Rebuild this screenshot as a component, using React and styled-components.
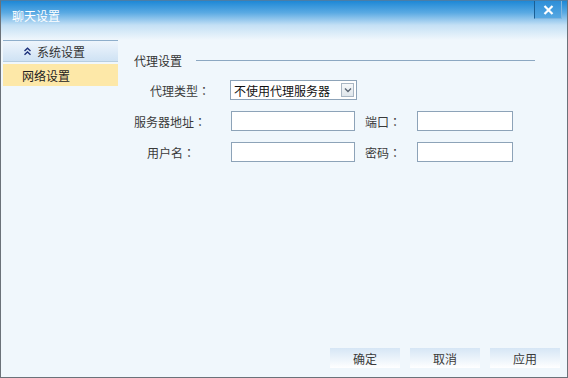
import styled, { createGlobalStyle } from "styled-components";

const GlobalStyle = createGlobalStyle`
  html, body {
    margin: 0;
    padding: 0;
    background: #f0f7fc;
  }
  body {
    font-family: "Noto Sans CJK SC", "DejaVu Sans", sans-serif;
    font-size: 12px;
    color: #333;
  }
`;

const Window = styled.div`
  width: 568px;
  height: 378px;
  box-sizing: border-box;
  display: flex;
  flex-direction: column;
  background: #f0f7fc;
  border: 1px solid #6b7279;
  border-top-color: #4a7ea8;
`;

const TitleBar = styled.div`
  height: 39px;
  flex-shrink: 0;
  display: flex;
  align-items: flex-start;
  justify-content: space-between;
  background: linear-gradient(180deg, #1e88d6 0%, #5aaae3 30%, #c4e0f5 62%, #f0f7fc 100%);
`;

const Title = styled.div`
  color: #fff;
  font-size: 12px;
  line-height: 14px;
  padding: 8px 0 0 11px;
`;

const CloseButton = styled.div`
  width: 26px;
  height: 17px;
  margin-right: 5px;
  display: flex;
  align-items: center;
  justify-content: center;
  border-left: 1px solid #1a5f94;
  border-right: 1px solid #7fb6e0;
  border-bottom: 1px solid #7fb6e0;
  background: linear-gradient(180deg, #2d8ed8, #56a8e2);
`;

const Body = styled.div`
  flex: 1;
  display: flex;
  min-height: 0;
`;

const Sidebar = styled.div`
  width: 115px;
  margin-left: 2px;
  flex-shrink: 0;
  display: flex;
  flex-direction: column;
  gap: 2px;
`;

const NavHeader = styled.div`
  height: 20px;
  display: flex;
  align-items: center;
  padding-left: 20px;
  gap: 5px;
  color: #333;
  border-top: 1px solid #8eaecb;
  border-bottom: 1px solid #b8cee0;
  background: linear-gradient(180deg, #eef5fc 0%, #cfe2f4 100%);
`;

const NavItem = styled.div`
  height: 22px;
  display: flex;
  align-items: center;
  padding-left: 19px;
  color: #222;
  background: ${(p) => (p.$active ? "#fde8a8" : "transparent")};
`;

const Content = styled.div`
  flex: 1;
  display: flex;
  flex-direction: column;
  padding: 12px 32px 0 16px;
`;

const SectionHead = styled.div`
  display: flex;
  align-items: center;
  gap: 14px;
  color: #333;
  height: 16px;
`;

const Rule = styled.div`
  flex: 1;
  height: 1px;
  background: #8ca8c2;
`;

const Form = styled.div`
  display: grid;
  grid-template-columns: 97px 124px 62px 96px;
  row-gap: 11px;
  margin-top: 12px;
  align-items: center;
`;

const Label = styled.div`
  padding-left: ${(p) => p.$indent || 0}px;
  color: #3a3a3a;
  white-space: nowrap;
`;

const Colon = styled.span`
  font-family: "Noto Sans CJK TC", "DejaVu Sans", sans-serif;
`;

const Input = styled.div`
  height: 20px;
  box-sizing: border-box;
  border: 1px solid #8da3b8;
  background: #fff;
`;

const Select = styled.div`
  width: 127px;
  height: 20px;
  box-sizing: border-box;
  margin-left: -1px;
  border: 1px solid #8da3b8;
  background: #fff;
  display: flex;
  align-items: center;
  justify-content: space-between;
  padding: 0 2px 0 3px;
  color: #111;
  font-size: 12px;
`;

const SelectArrow = styled.div`
  width: 13px;
  height: 14px;
  box-sizing: border-box;
  border: 1px solid #a9b6c3;
  background: linear-gradient(180deg, #f6f8fa, #dfe6ec);
  display: flex;
  align-items: center;
  justify-content: center;
`;

const Footer = styled.div`
  height: 36px;
  flex-shrink: 0;
  display: flex;
  justify-content: flex-end;
  align-items: flex-start;
  gap: 10px;
  padding: 7px 7px 0 0;
  box-sizing: border-box;
`;

const Button = styled.div`
  width: 70px;
  height: 20px;
  display: flex;
  align-items: center;
  justify-content: center;
  color: #3a3a3a;
  background: linear-gradient(180deg, #d6e6f5 0%, #eef5fb 60%, #ffffff 100%);
`;

function FieldLabel({ text, indent }) {
  return (
    <Label $indent={indent}>
      {text}
      <Colon>：</Colon>
    </Label>
  );
}

function App() {
  return (
    <>
      <GlobalStyle />
      <Window>
        <TitleBar>
          <Title>聊天设置</Title>
          <CloseButton>
            <svg width="11" height="10" viewBox="0 0 11 10">
              <path d="M1.5 1 L9.5 9 M9.5 1 L1.5 9" stroke="#fff" strokeWidth="2.2" />
            </svg>
          </CloseButton>
        </TitleBar>
        <Body>
          <Sidebar>
            <NavHeader>
              <svg width="9" height="9" viewBox="0 0 9 9">
                <path d="M1.5 4 L4.5 1.2 L7.5 4 M1.5 7.8 L4.5 5 L7.5 7.8" fill="none" stroke="#1b2f7a" strokeWidth="1.4" />
              </svg>
              系统设置
            </NavHeader>
            <NavItem $active>网络设置</NavItem>
          </Sidebar>
          <Content>
            <SectionHead>
              代理设置
              <Rule />
            </SectionHead>
            <Form>
              <FieldLabel text="代理类型" indent={16} />
              <Select>
                不使用代理服务器
                <SelectArrow>
                  <svg width="8" height="6" viewBox="0 0 8 6">
                    <path d="M1 1.5 L4 4.5 L7 1.5" fill="none" stroke="#5a6673" strokeWidth="1.4" />
                  </svg>
                </SelectArrow>
              </Select>
              <div />
              <div />
              <FieldLabel text="服务器地址" indent={0} />
              <Input />
              <FieldLabel text="端口" indent={10} />
              <Input />
              <FieldLabel text="用户名" indent={13} />
              <Input />
              <FieldLabel text="密码" indent={10} />
              <Input />
            </Form>
          </Content>
        </Body>
        <Footer>
          <Button>确定</Button>
          <Button>取消</Button>
          <Button>应用</Button>
        </Footer>
      </Window>
    </>
  );
}

export default App;
